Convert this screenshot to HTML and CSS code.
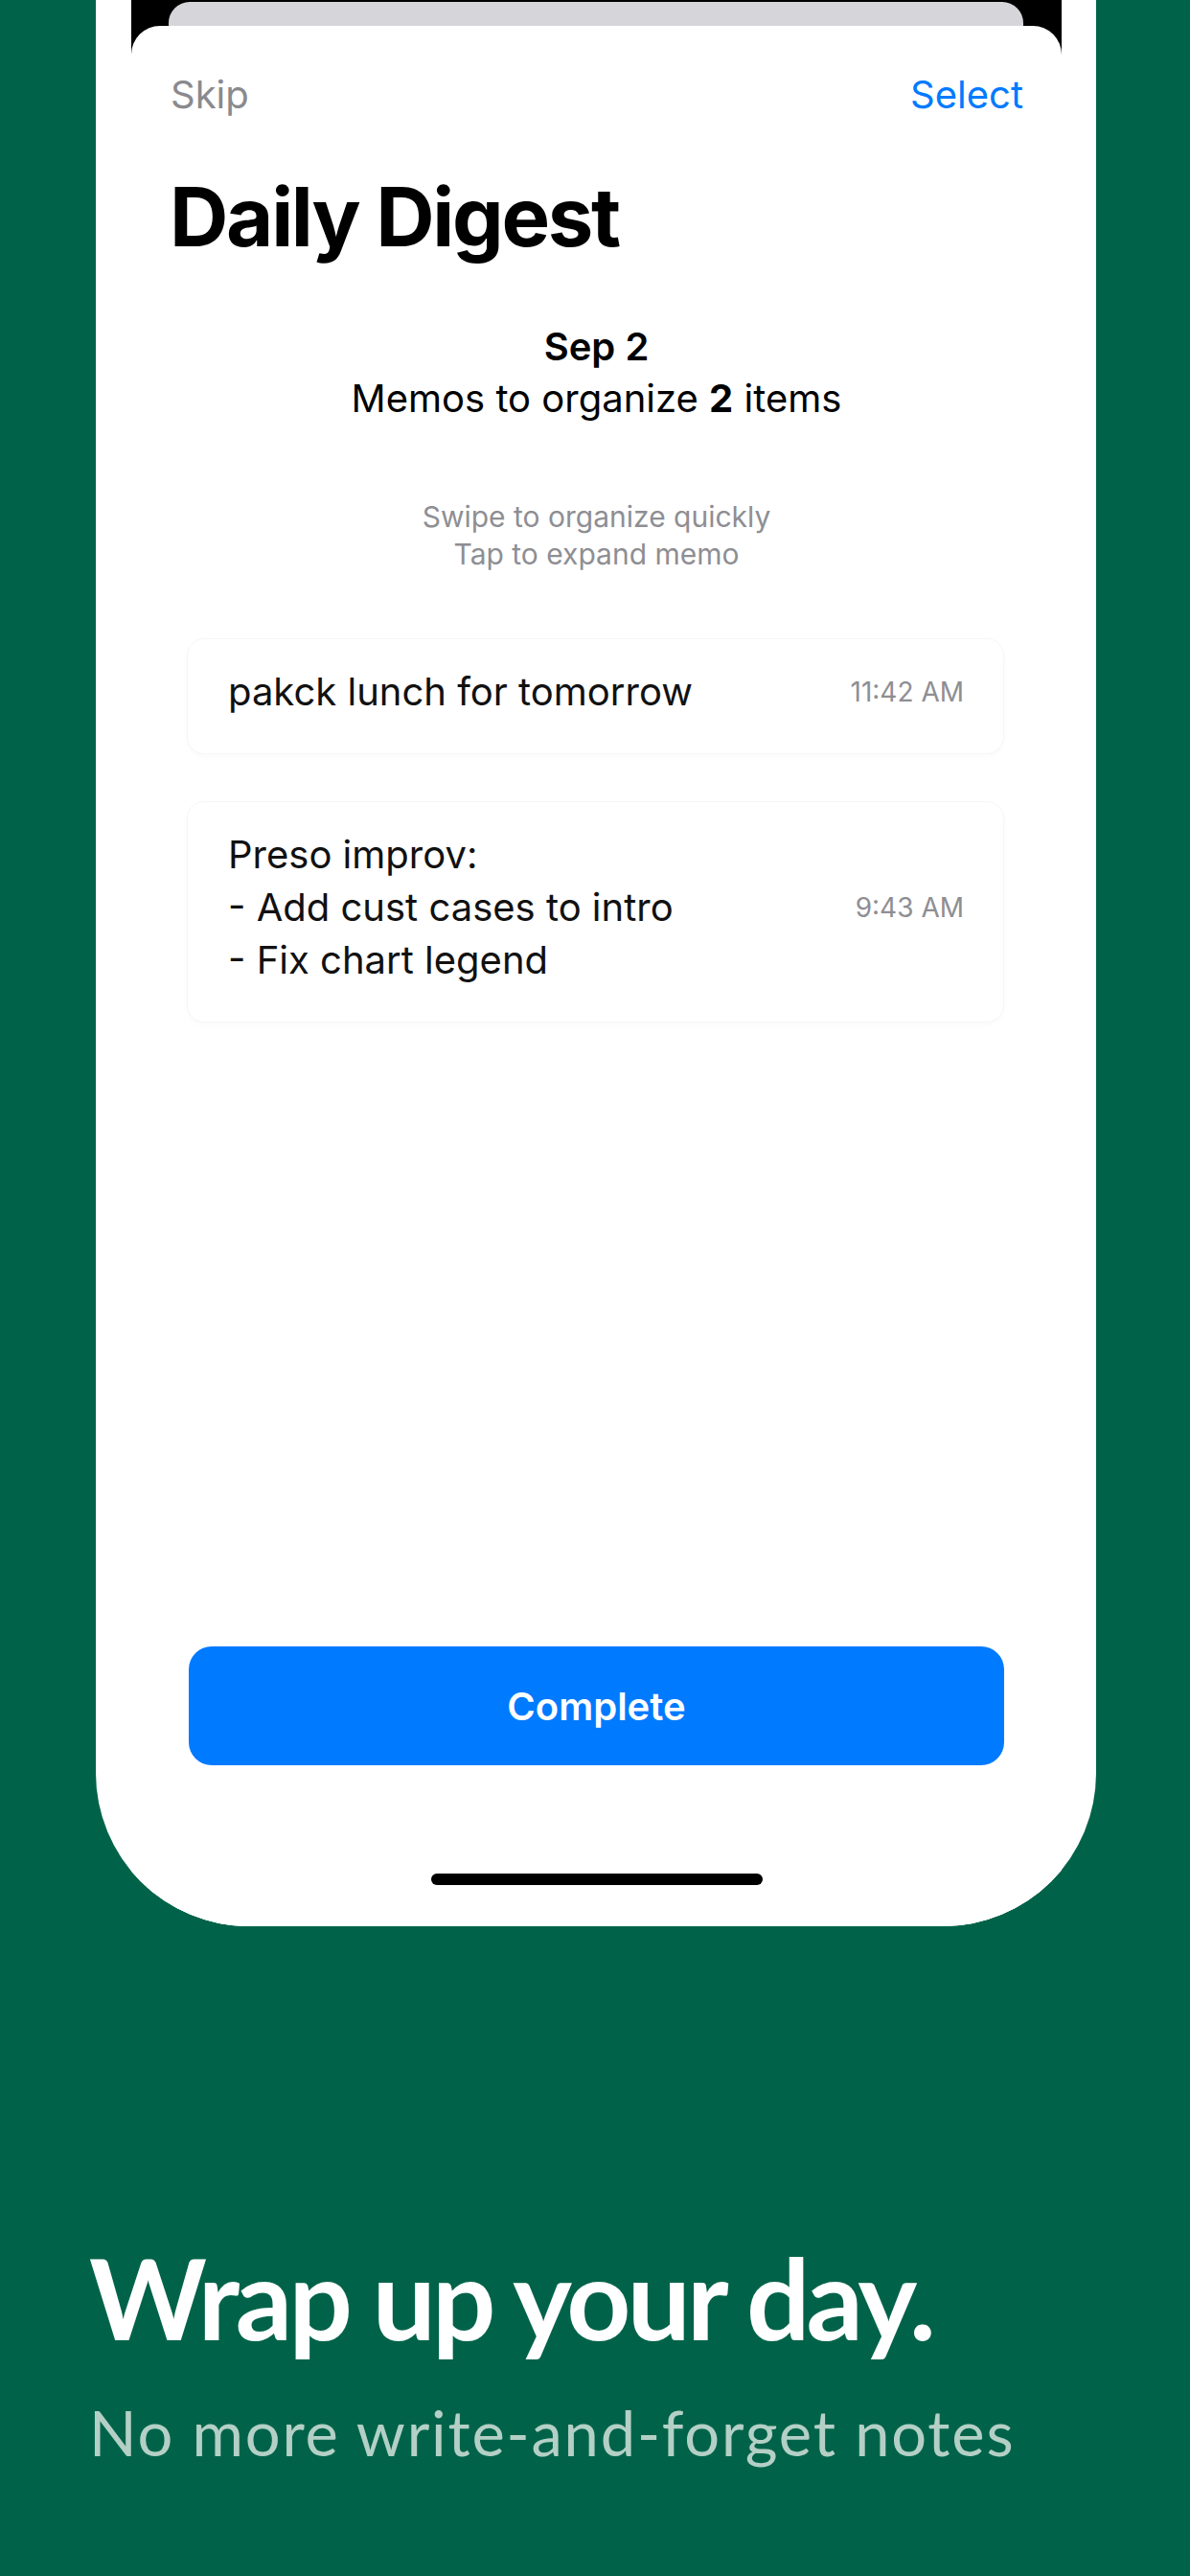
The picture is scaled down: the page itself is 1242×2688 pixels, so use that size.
FILE: index.html
```html
<!DOCTYPE html>
<html lang="en">
    <head>
        <meta charset="utf-8">
        <link rel="stylesheet" href="styles.css">
    </head>
    <body>
        <div id="page">
            <div class="phone">
                <div class="screen">
                    <div class="backcard"></div>
                    <div class="sheet">
                        <div class="navbar">
                            <span class="skip">Skip</span>
                            <span class="select">Select</span>
                        </div>
                        <h1 class="title">Daily Digest</h1>
                        <div class="summary">
                            <div class="date">Sep 2</div>
                            <div class="count">Memos to organize <b>2</b> items</div>
                        </div>
                        <div class="hints">
                            <div>Swipe to organize quickly</div>
                            <div>Tap to expand memo</div>
                        </div>
                        <div class="memos">
                            <div class="memo">
                                <div class="memo-text">pakck lunch for tomorrow</div>
                                <div class="memo-time">11:42 AM</div>
                            </div>
                            <div class="memo">
                                <div class="memo-text">Preso improv:<br>- Add cust cases to intro<br>- Fix chart legend</div>
                                <div class="memo-time">9:43 AM</div>
                            </div>
                        </div>
                        <div class="spacer"></div>
                        <button class="complete">Complete</button>
                        <div class="home-indicator"></div>
                    </div>
                </div>
            </div>
            <div class="caption">
                <h2>Wrap up your day.</h2>
                <p>No more write-and-forget notes</p>
            </div>
        </div>
    </body>
</html>
```

FILE: styles.css
```css
body{
    margin: 0;
    background-color: #006349;
    font-family: Inter, "Noto Sans", sans-serif;
}
#page{
    width: 1242px;
    height: 2688px;
    overflow: hidden;
}
.phone{
    box-sizing: border-box;
    width: 1044px;
    height: 2010px;
    margin-left: 100px;
    padding: 0 36px 0 37px;
    overflow: hidden;
    background-color: #fff;
    border-radius: 0 0 160px 160px;
}
.screen{                /* black only behind the top of the sheet */
    display: flex;
    flex-direction: column;
    height: 100%;
    padding-top: 2px;
    box-sizing: border-box;
    background: linear-gradient(#000 0, #000 90px, #fff 90px);
}
.backcard{
    height: 25px;
    margin: 0 40px 0 39px;
    background-color: #d6d6da;
    border-radius: 22px 22px 0 0;
}
.sheet{
    flex: 1;
    display: flex;
    flex-direction: column;
    background-color: #fff;
    border-radius: 30px 30px 0 0;
}
.navbar{
    display: flex;
    justify-content: space-between;
    margin-top: 48px;
    padding: 0 40px 0 41px;
    font-size: 40px;
    line-height: 48px;
}
.skip{
    color: #8a8a8e;
}
.select{
    color: #007aff;
}
.title{
    margin: 54px 0 0 40px;
    font-size: 85px;
    line-height: 100px;
    font-weight: 700;
    letter-spacing: -2.3px;
    color: #000;
}
.summary{
    margin-top: 58px;
    text-align: center;
    font-size: 40px;
    line-height: 54px;
    color: #000;
}
.date{
    font-weight: 600;
}
.count b{
    font-weight: 700;
}
.hints{
    margin-top: 77px;
    text-align: center;
    font-size: 30px;
    line-height: 39px;
    color: #8e8e93;
}
.memos{
    display: flex;
    flex-direction: column;
    gap: 49px;
    margin: 68px 60px 0 58px;
}
.memo{
    display: flex;
    align-items: center;
    justify-content: space-between;
    padding: 27px 41px 37px 42px;
    background-color: #fff;
    border: 1px solid #f6f6f8;
    border-radius: 18px;
    box-shadow: 0 3px 6px rgba(0, 0, 0, 0.02);
}
.memo-text{
    font-size: 40px;
    line-height: 55px;
    color: #111;
}
.memo-time{
    font-size: 28px;
    color: #8e8e93;
}
.spacer{
    flex: 1;
}
.complete{
    height: 124px;
    margin: 0 60px;
    border: 0;
    border-radius: 24px;
    background-color: #007aff;
    color: #fff;
    font-family: Inter, "Noto Sans", sans-serif;
    font-size: 40px;
    font-weight: 600;
}
.home-indicator{
    width: 346px;
    height: 12px;
    margin: 113px auto 43px;
    background-color: #000;
    border-radius: 6px;
}
.caption{
    margin-top: 322px;
    padding-left: 93px;
    font-family: Lato, "Noto Sans", sans-serif;
}
.caption h2{
    margin: 0;
    font-size: 117px;
    line-height: 130px;
    font-weight: 700;
    letter-spacing: -3.8px;
    color: #fff;
}
.caption p{
    margin: 38px 0 0 0;
    font-size: 65px;
    line-height: 76px;
    letter-spacing: 1.8px;
    color: #b4d0c6;
}
```
